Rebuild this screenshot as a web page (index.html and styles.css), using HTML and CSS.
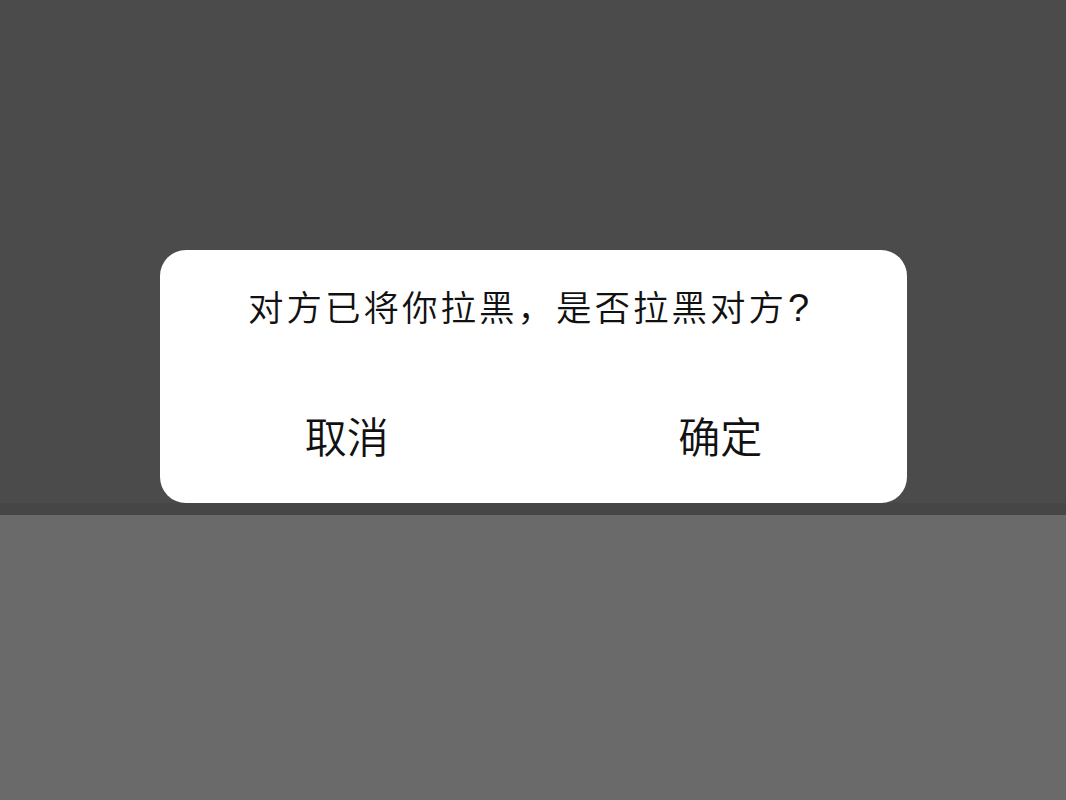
FILE: index.html
```html
<!DOCTYPE html>
<html lang="zh-CN">
<head>
    <meta charset="UTF-8">
    <meta name="viewport" content="width=device-width, initial-scale=1.0">
    <title>拉黑</title>
    <link rel="stylesheet" href="styles.css">
</head>
<body>
    <div class="screen-top">
        <div class="dialog">
            <div class="dialog-title">对方已将你拉黑，是否拉黑对方<span class="mark">?</span></div>
            <div class="dialog-actions">
                <button class="action">取消</button>
                <button class="action">确定</button>
            </div>
        </div>
    </div>
    <div class="screen-bottom"></div>
</body>
</html>
```

FILE: styles.css
```css
:root {
    --bg-top: #4b4b4b;
    --bg-bottom: #6a6a6a;
    --dialog-bg: #fff;
    --txt-color: #111;
}

body {
    margin: 0;
    padding: 0;
    height: 800px;
    overflow: hidden;
    background: var(--bg-bottom);
    font-family: "Noto Sans CJK SC", "Noto Sans", sans-serif;
}

.screen-top {
    height: 515px;
    box-sizing: border-box;
    background: var(--bg-top);
    display: flex;
    justify-content: center;
    align-items: flex-end;
    padding: 0 0 12px 1px;
    box-shadow: inset 0 -12px 0 #464646;
}

.dialog {
    width: 747px;
    height: 253px;
    box-sizing: border-box;
    background: var(--dialog-bg);
    border-radius: 26px;
    padding-top: 38px;
    display: flex;
    flex-direction: column;
}

.dialog-title {
    height: 36px;
    line-height: 36px;
    text-align: center;
    font-size: 35.5px;
    font-weight: 350;
    letter-spacing: 3px;
    color: var(--txt-color);
    padding-right: 10px;
}

.dialog-title .mark {
    font-family: "Liberation Sans", sans-serif;
    font-size: 38px;
    letter-spacing: 0;
    margin-left: 1px;
}

.dialog-actions {
    margin-top: 71px;
    display: grid;
    grid-template-columns: 1fr 1fr;
}

.action {
    height: 80px;
    line-height: 80px;
    padding: 0;
    border: none;
    background: none;
    font-family: inherit;
    font-size: 42px;
    font-weight: 350;
    color: var(--txt-color);
    cursor: pointer;
}
```
